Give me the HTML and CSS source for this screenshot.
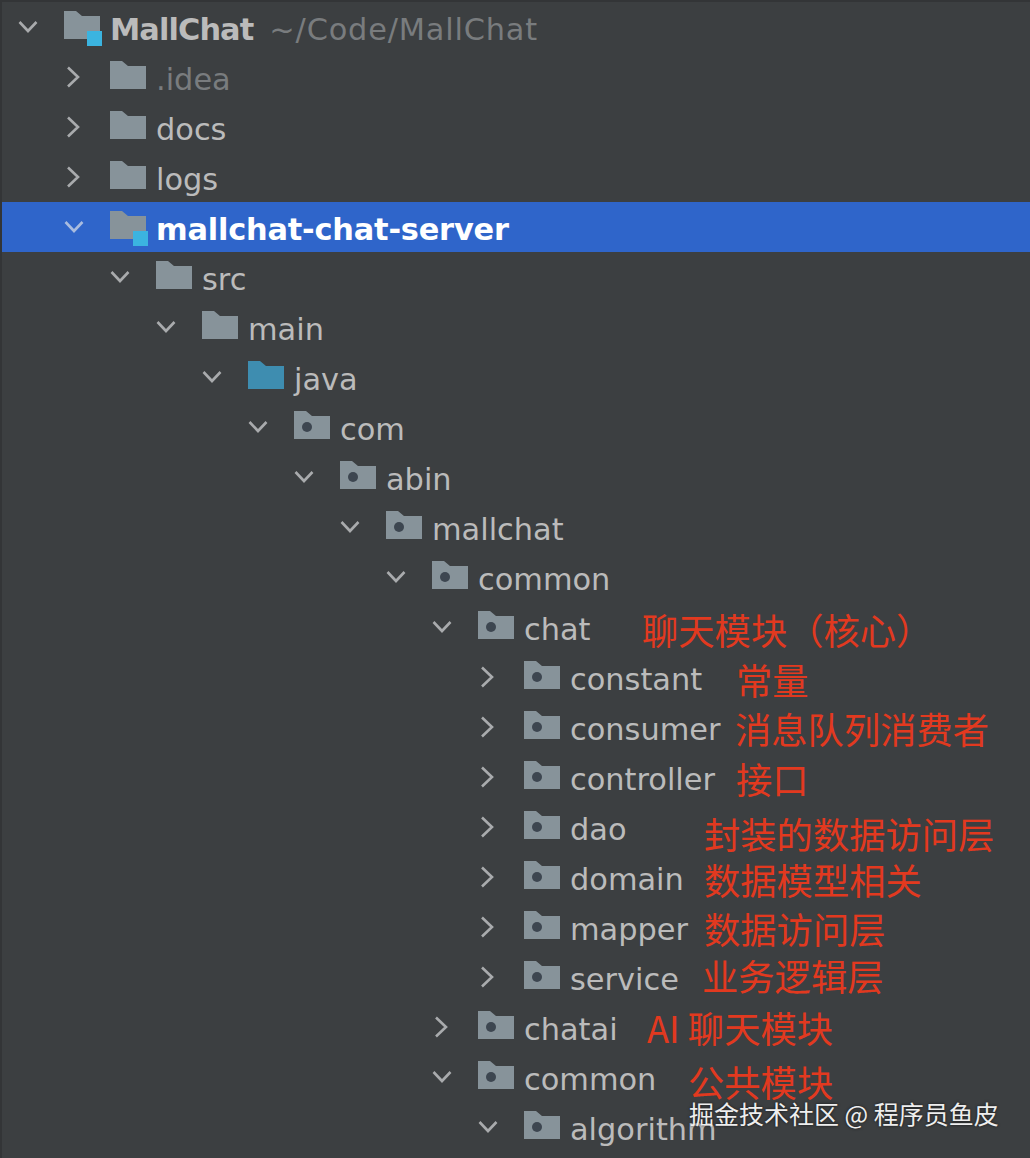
FILE: index.html
```html
<!DOCTYPE html>
<html lang="en">
<head>
    <meta charset="UTF-8">
    <meta name="viewport" content="width=device-width, initial-scale=1.0">
    <title>MallChat project tree</title>
    <link rel="stylesheet" href="styles.css">
</head>
<body>
    <svg class="defs" width="0" height="0">
        <symbol id="plain" viewBox="0 0 36 28"><path d="M0 0H12L18 5H36V28H0Z"/></symbol>
        <symbol id="pkg" viewBox="0 0 36 28"><path d="M0 0H12L18 5H36V28H0Z"/><circle class="hole" cx="13" cy="16" r="5"/></symbol>
        <symbol id="open" viewBox="0 0 20 14"><path d="M1.5 2L10 11L18.5 2" fill="none" stroke="currentColor" stroke-width="2.6"/></symbol>
        <symbol id="closed" viewBox="0 0 14 22"><path d="M2 1.5L12 11L2 20.5" fill="none" stroke="currentColor" stroke-width="2.6"/></symbol>
    </svg>

    <div class="tree">
        <div class="row d0 root">
            <span class="toggle"><svg class="chev-open"><use href="#open"/></svg></span>
            <span class="folder module"><svg><use href="#plain"/></svg><i class="badge"></i></span>
            <span class="name bold">MallChat</span>
            <span class="path">~/Code/MallChat</span>
        </div>
        <div class="row d1">
            <span class="toggle"><svg class="chev-closed"><use href="#closed"/></svg></span>
            <span class="folder"><svg><use href="#plain"/></svg></span>
            <span class="name dim">.idea</span>
        </div>
        <div class="row d1">
            <span class="toggle"><svg class="chev-closed"><use href="#closed"/></svg></span>
            <span class="folder"><svg><use href="#plain"/></svg></span>
            <span class="name">docs</span>
        </div>
        <div class="row d1">
            <span class="toggle"><svg class="chev-closed"><use href="#closed"/></svg></span>
            <span class="folder"><svg><use href="#plain"/></svg></span>
            <span class="name">logs</span>
        </div>
        <div class="row d1 selected">
            <span class="toggle"><svg class="chev-open"><use href="#open"/></svg></span>
            <span class="folder module"><svg><use href="#plain"/></svg><i class="badge"></i></span>
            <span class="name bold">mallchat-chat-server</span>
        </div>
        <div class="row d2">
            <span class="toggle"><svg class="chev-open"><use href="#open"/></svg></span>
            <span class="folder"><svg><use href="#plain"/></svg></span>
            <span class="name">src</span>
        </div>
        <div class="row d3">
            <span class="toggle"><svg class="chev-open"><use href="#open"/></svg></span>
            <span class="folder"><svg><use href="#plain"/></svg></span>
            <span class="name">main</span>
        </div>
        <div class="row d4">
            <span class="toggle"><svg class="chev-open"><use href="#open"/></svg></span>
            <span class="folder source"><svg><use href="#plain"/></svg></span>
            <span class="name">java</span>
        </div>
        <div class="row d5">
            <span class="toggle"><svg class="chev-open"><use href="#open"/></svg></span>
            <span class="folder"><svg><use href="#pkg"/></svg></span>
            <span class="name">com</span>
        </div>
        <div class="row d6">
            <span class="toggle"><svg class="chev-open"><use href="#open"/></svg></span>
            <span class="folder"><svg><use href="#pkg"/></svg></span>
            <span class="name">abin</span>
        </div>
        <div class="row d7">
            <span class="toggle"><svg class="chev-open"><use href="#open"/></svg></span>
            <span class="folder"><svg><use href="#pkg"/></svg></span>
            <span class="name">mallchat</span>
        </div>
        <div class="row d8">
            <span class="toggle"><svg class="chev-open"><use href="#open"/></svg></span>
            <span class="folder"><svg><use href="#pkg"/></svg></span>
            <span class="name">common</span>
        </div>
        <div class="row d9">
            <span class="toggle"><svg class="chev-open"><use href="#open"/></svg></span>
            <span class="folder"><svg><use href="#pkg"/></svg></span>
            <span class="name">chat</span>
        </div>
        <div class="row d10">
            <span class="toggle"><svg class="chev-closed"><use href="#closed"/></svg></span>
            <span class="folder"><svg><use href="#pkg"/></svg></span>
            <span class="name">constant</span>
        </div>
        <div class="row d10">
            <span class="toggle"><svg class="chev-closed"><use href="#closed"/></svg></span>
            <span class="folder"><svg><use href="#pkg"/></svg></span>
            <span class="name">consumer</span>
        </div>
        <div class="row d10">
            <span class="toggle"><svg class="chev-closed"><use href="#closed"/></svg></span>
            <span class="folder"><svg><use href="#pkg"/></svg></span>
            <span class="name">controller</span>
        </div>
        <div class="row d10">
            <span class="toggle"><svg class="chev-closed"><use href="#closed"/></svg></span>
            <span class="folder"><svg><use href="#pkg"/></svg></span>
            <span class="name">dao</span>
        </div>
        <div class="row d10">
            <span class="toggle"><svg class="chev-closed"><use href="#closed"/></svg></span>
            <span class="folder"><svg><use href="#pkg"/></svg></span>
            <span class="name">domain</span>
        </div>
        <div class="row d10">
            <span class="toggle"><svg class="chev-closed"><use href="#closed"/></svg></span>
            <span class="folder"><svg><use href="#pkg"/></svg></span>
            <span class="name">mapper</span>
        </div>
        <div class="row d10">
            <span class="toggle"><svg class="chev-closed"><use href="#closed"/></svg></span>
            <span class="folder"><svg><use href="#pkg"/></svg></span>
            <span class="name">service</span>
        </div>
        <div class="row d9">
            <span class="toggle"><svg class="chev-closed"><use href="#closed"/></svg></span>
            <span class="folder"><svg><use href="#pkg"/></svg></span>
            <span class="name">chatai</span>
        </div>
        <div class="row d9">
            <span class="toggle"><svg class="chev-open"><use href="#open"/></svg></span>
            <span class="folder"><svg><use href="#pkg"/></svg></span>
            <span class="name">common</span>
        </div>
        <div class="row d10">
            <span class="toggle"><svg class="chev-open"><use href="#open"/></svg></span>
            <span class="folder"><svg><use href="#pkg"/></svg></span>
            <span class="name">algorithm</span>
        </div>
    </div>

    <!-- hand written notes on top of the screenshot -->
    <span class="note n-chat">聊天模块（核心）</span>
    <span class="note n-constant">常量</span>
    <span class="note n-consumer">消息队列消费者</span>
    <span class="note n-controller">接口</span>
    <span class="note n-dao">封装的数据访问层</span>
    <span class="note n-domain">数据模型相关</span>
    <span class="note n-mapper">数据访问层</span>
    <span class="note n-service">业务逻辑层</span>
    <span class="note n-chatai">AI 聊天模块</span>
    <span class="note n-common">公共模块</span>

    <span class="watermark">掘金技术社区 @ 程序员鱼皮</span>
</body>
</html>
```

FILE: styles.css
```css
html, body {
    margin: 0;
    padding: 0;
}

body {
    position: relative;
    width: 1030px;
    height: 1158px;
    overflow: hidden;
    background: #3c3f41;
    color: #bbbbbb;
    font-family: "DejaVu Sans", "Noto Sans CJK SC", sans-serif;
    font-size: 30.4px;
}

.defs {
    position: absolute;
}

.tree {
    box-sizing: border-box;
    height: 1158px;
    padding: 2px 0 0 2px;
    box-shadow: inset 2px 2px 0 #333537;
}

.row {
    display: flex;
    align-items: center;
    height: 50px;
    white-space: nowrap;
}

.d0 { padding-left: 16px; }
.d1 { padding-left: 62px; }
.d2 { padding-left: 108px; }
.d3 { padding-left: 154px; }
.d4 { padding-left: 200px; }
.d5 { padding-left: 246px; }
.d6 { padding-left: 292px; }
.d7 { padding-left: 338px; }
.d8 { padding-left: 384px; }
.d9 { padding-left: 430px; }
.d10 { padding-left: 476px; }

.selected {
    background: #2f65ca;
    color: #fff;
}

.toggle {
    display: flex;
    align-items: center;
    width: 46px;
    height: 30px;
    color: #a9abad;
}

.toggle svg {
    display: block;
}

.chev-open {
    width: 20px;
    height: 14px;
}

.chev-closed {
    width: 14px;
    height: 22px;
    margin-left: 2px;
}

.selected .toggle {
    color: #a9bcdf;
}

.folder {
    position: relative;
    flex: none;
    width: 36px;
    height: 28px;
    margin-top: -4px;
    fill: #87939a;
}

.folder svg {
    display: block;
    width: 36px;
    height: 28px;
}

.source {
    fill: #3e8db0;
}

.hole {
    fill: #3d4650;
}

.badge {
    position: absolute;
    right: -2px;
    bottom: -7px;
    width: 15px;
    height: 15px;
    background: #3bb4e0;
}

.name {
    margin-left: 10px;
    margin-top: 4px;
}

.bold {
    font-weight: 700;
    letter-spacing: -0.2px;
}

.root .bold {
    letter-spacing: -0.9px;
}

.dim {
    color: #797c7e;
}

.path {
    margin-left: 16px;
    margin-top: 4px;
    color: #797c7e;
    letter-spacing: 0.8px;
}

.note {
    position: absolute;
    color: #e2391f;
    font-family: "Noto Sans CJK SC", sans-serif;
    font-size: 36.3px;
    line-height: 44px;
    white-space: nowrap;
}

.n-chat { left: 642px; top: 607px; }
.n-constant { left: 736px; top: 657px; }
.n-consumer { left: 735px; top: 706px; }
.n-controller { left: 736px; top: 756px; }
.n-dao { left: 704px; top: 811px; }
.n-domain { left: 704px; top: 857px; }
.n-mapper { left: 704px; top: 906px; }
.n-service { left: 702px; top: 953px; }
.n-chatai { left: 647px; top: 1005px; }
.n-common { left: 688px; top: 1059px; }

.watermark {
    position: absolute;
    left: 689px;
    top: 1097px;
    color: #eeeeee;
    font-family: "Noto Sans CJK SC", sans-serif;
    font-size: 25px;
    line-height: 32px;
    white-space: nowrap;
    text-shadow: 0 0 3px rgba(0, 0, 0, 0.7);
}
```
